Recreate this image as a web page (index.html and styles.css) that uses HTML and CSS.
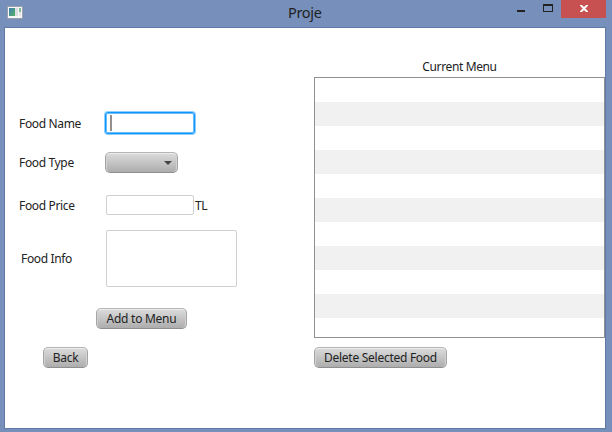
FILE: index.html
```html
<!DOCTYPE html>
<html lang="en">
<head>
<meta charset="utf-8">
<title>Proje</title>
<link rel="stylesheet" href="styles.css">
</head>
<body>
<div class="window">
  <header class="titlebar">
    <svg class="app-icon" width="16" height="13" viewBox="0 0 16 13">
      <defs><linearGradient id="g" x1="0" y1="0" x2="1" y2="1"><stop offset="0" stop-color="#3d7fae"/><stop offset="1" stop-color="#55b267"/></linearGradient></defs>
      <rect x=".5" y=".5" width="15" height="12" fill="#f7f7f7" stroke="#9a9fac"/>
      <rect x="2" y="2" width="6" height="8" fill="url(#g)"/>
      <rect x="8" y="2" width="3" height="8" fill="#dcdee0"/>
      <rect x="12" y="2" width="2" height="4" fill="#7dbb9b"/>
      <rect x="12" y="6" width="2" height="4" fill="#e4e6e8"/>
    </svg>
    <h1 class="title">Proje</h1>
    <div class="controls">
      <svg width="61" height="18" viewBox="0 0 61 18" shape-rendering="crispEdges">
        <rect x="17" y="10" width="8" height="2" fill="#222"/>
        <path d="M43 4h10v8H43zM44 6v5h8V6z" fill="#222" fill-rule="evenodd"/>
      </svg>
      <div class="close">
        <svg width="8" height="7" viewBox="0 0 8 7"><path d="M0 0h2l2 2 2-2h2v.7L5.300 3.500 8 6.300V7H6L4 5 2 7H0v-.7L2.700 3.500 0 .7z" fill="#fff"/></svg>
      </div>
    </div>
  </header>
  <main class="client">
    <section class="form">
      <div class="row name"><span class="label">Food Name</span><div class="field focused"><i class="caret"></i></div></div>
      <div class="row type"><span class="label">Food Type</span><div class="button combo"><svg width="8" height="4" viewBox="0 0 8 4"><path d="M0 0h8L4 4z" fill="#444"/></svg></div></div>
      <div class="row price"><span class="label">Food Price</span><div class="field"></div><span class="unit">TL</span></div>
      <div class="row info"><span class="label">Food Info</span><div class="field"></div></div>
      <div class="button add"><span>Add to Menu</span></div>
      <div class="button back"><span>Back</span></div>
    </section>
    <section class="menu">
      <h2 class="caption">Current Menu</h2>
      <div class="list"></div>
      <div class="button delete"><span>Delete Selected Food</span></div>
    </section>
  </main>
</div>
</body>
</html>
```
FILE: styles.css
```css
* { box-sizing: border-box; }
body { margin: 0; font: 12px/16px "Noto Sans", "Open Sans", sans-serif; color: #222; }
h1, h2 { margin: 0; font-weight: 400; }
span, h1, h2 { white-space: nowrap; }
.window { width: 612px; height: 432px; background: #7690bb; overflow: hidden; }
.titlebar { height: 27px; display: grid; grid-template-columns: 288px 1fr auto; align-items: start; }
.app-icon { margin: 6px 0 0 7px; }
.title { font-size: 14.500px; line-height: 20px; margin-top: 2px; letter-spacing: -.3px; }
.controls { display: flex; width: 112px; }
.close { width: 45px; height: 18px; background: #c75050; display: flex; justify-content: center; padding-top: 5px; }
.client { margin-left: 4px; width: 602px; height: 402px; background: #fff; border: 1px solid #6079a5; display: grid; grid-template-columns: 309px 291px; }
.form { padding-top: 84px; display: flex; flex-direction: column; align-items: flex-start; }
.row { display: flex; align-items: center; padding-left: 14px; }
.label { width: 87px; letter-spacing: -.35px; }
.field { background: #fff; border: 1px solid #d0d0d0; border-radius: 2px; }
.name { height: 22px; }
.name .label { padding-top: 2px; }
.focused { width: 90px; height: 22px; margin-left: -1px; border: 1px solid #0f96ff; border-radius: 3px; box-shadow: inset 0 0 0 1px #6bbcfb, 0 0 0 1px #8fd0ff; }
.caret { display: block; width: 2px; height: 16px; margin: 2px 0 0 4px; background: #909090; }
.type { height: 21px; margin-top: 18px; }
.type .label { padding-top: 1px; }
.price { height: 20px; margin-top: 22px; }
.price .label, .unit { padding-top: 2px; }
.price .field { width: 88px; height: 20px; }
.unit { margin-left: 1px; letter-spacing: -.4px; }
.info { height: 57px; margin-top: 15px; padding-left: 16px; }
.info .label { width: 85px; padding-top: 1px; }
.info .field { width: 131px; height: 57px; }
.button { height: 21px; display: flex; align-items: center; justify-content: center; border: 1px solid; border-color: #b5b5b5 #a4a4a4 #8f8f8f; border-radius: 5px; background: linear-gradient(#dcdcdc, #adadad); box-shadow: inset 0 1px #ececec, inset 1px 0 #d2d2d2, inset -1px 0 #d2d2d2; letter-spacing: -.27px; }
.combo { width: 73px; margin-left: -1px; justify-content: flex-end; padding-right: 5px; }
.add { width: 91px; margin: 21px 0 0 91px; }
.back { width: 45px; margin: 18px 0 0 38px; }
.menu { display: flex; flex-direction: column; align-items: flex-start; padding-top: 31px; }
.caption { width: 291px; height: 18px; font-size: 12px; line-height: 16px; text-align: center; letter-spacing: -.37px; }
.list { width: 291px; height: 261px; border: 1px solid #909090; background: repeating-linear-gradient(#fff 0 24px, #f1f1f1 24px 48px); }
.delete { width: 133px; margin-top: 9px; }
```
